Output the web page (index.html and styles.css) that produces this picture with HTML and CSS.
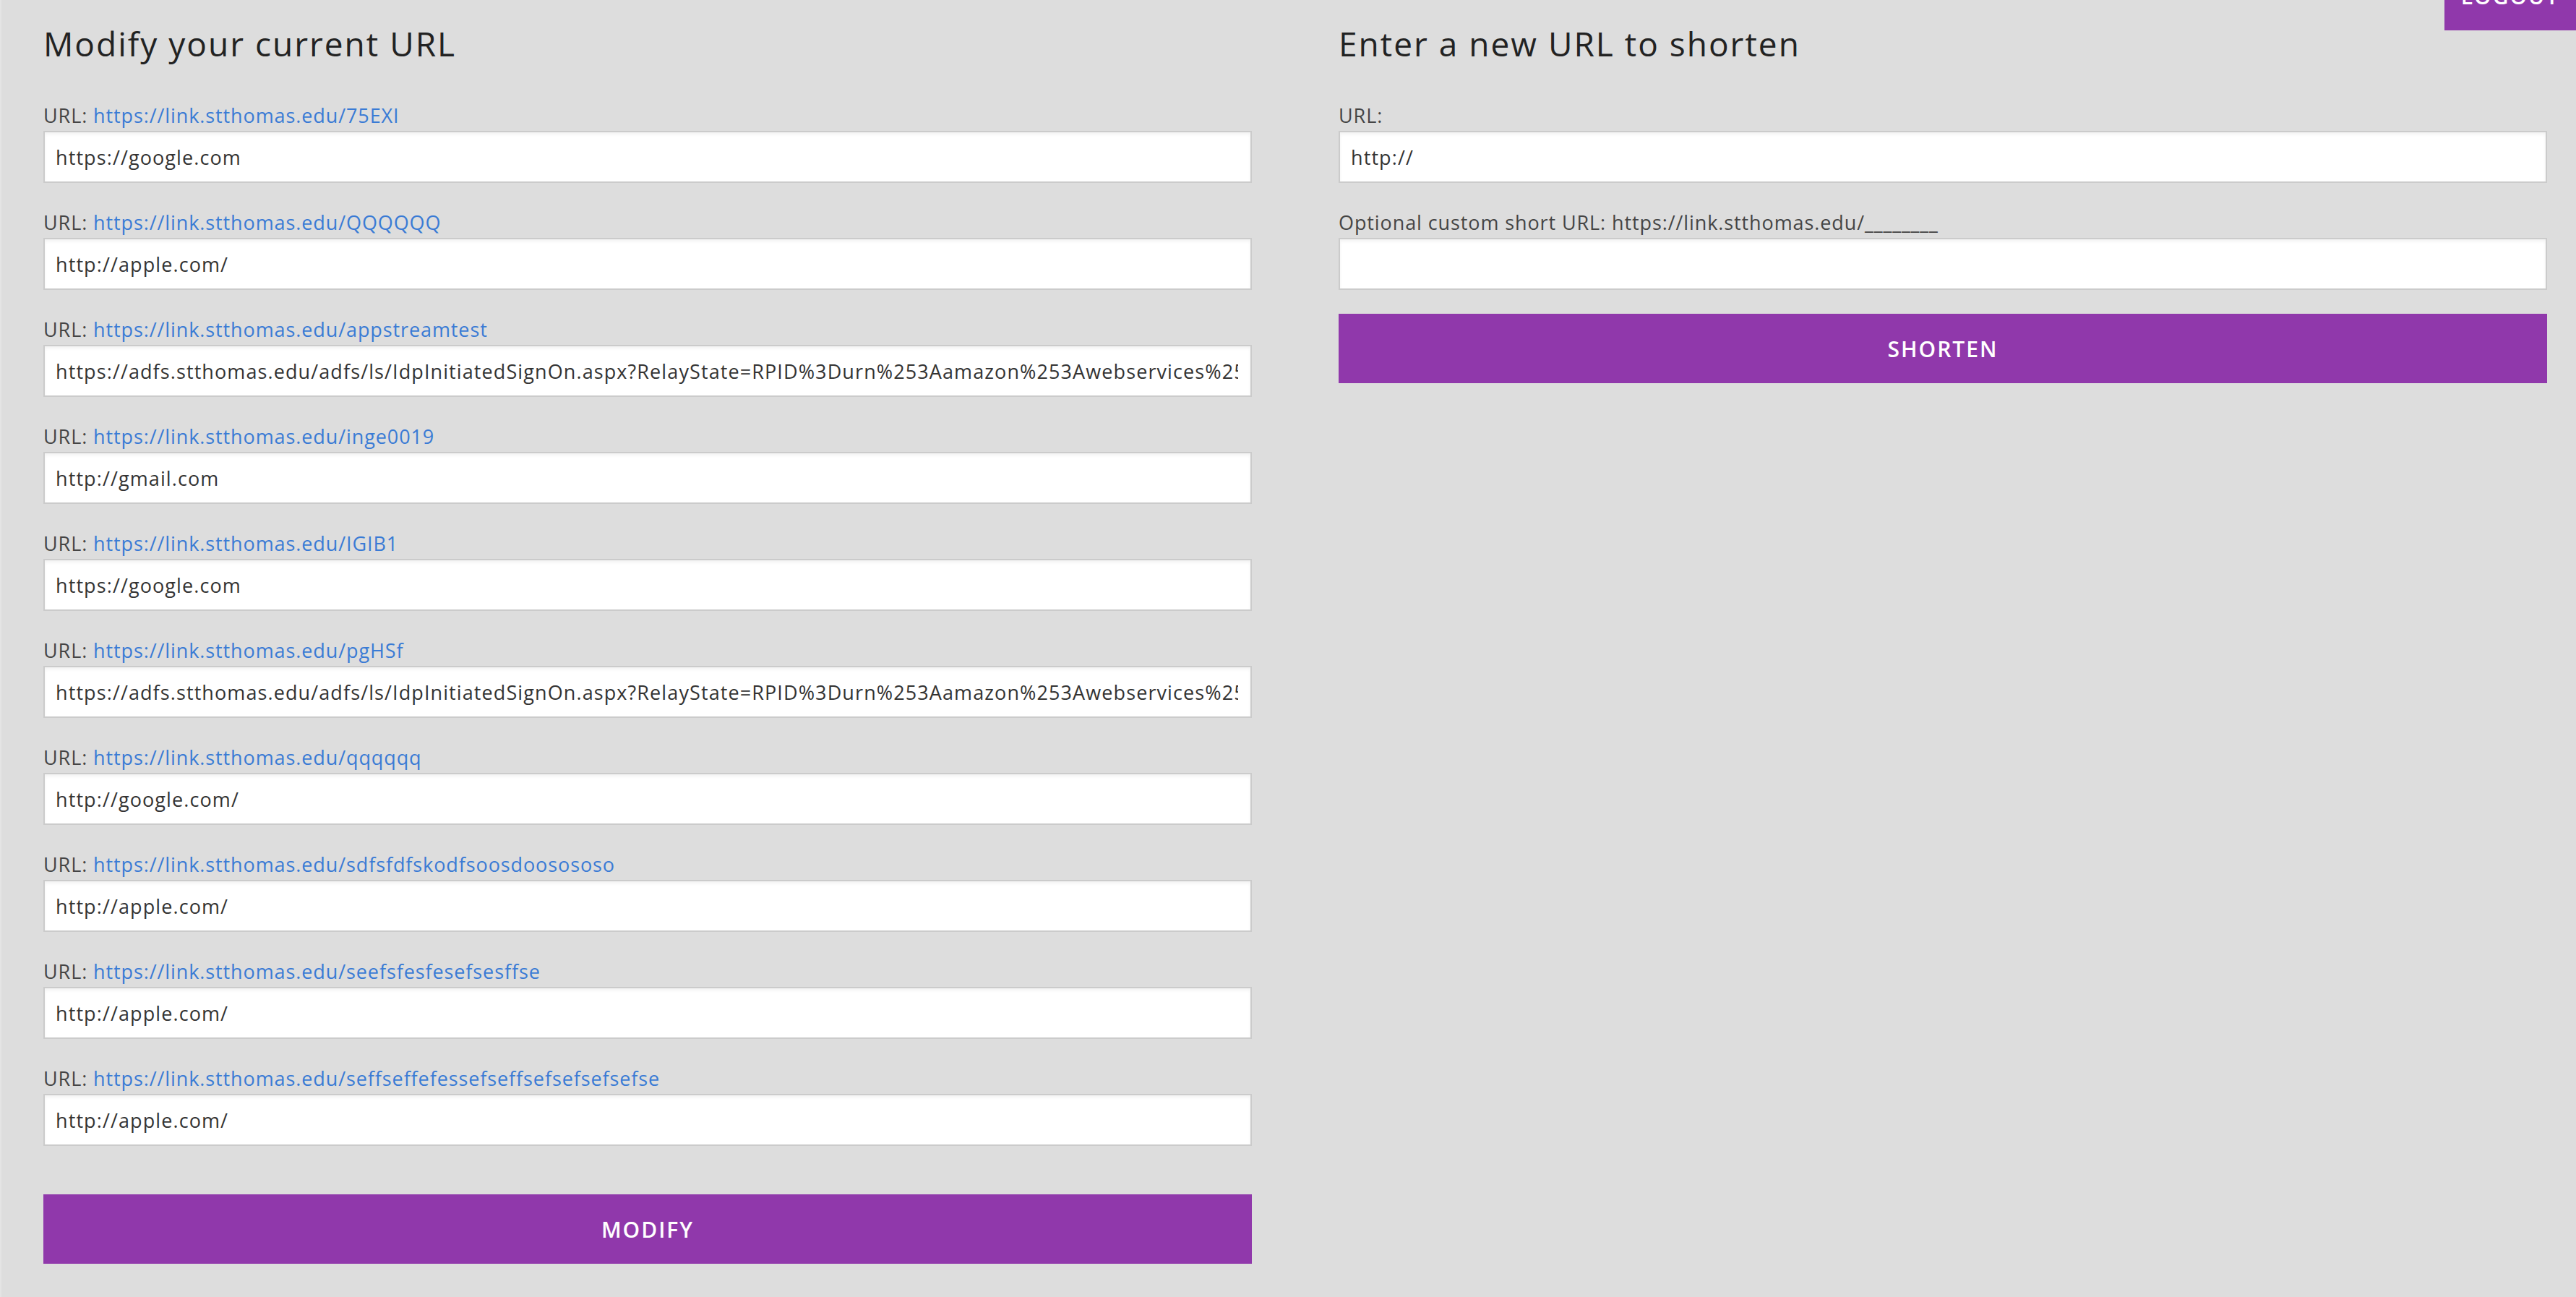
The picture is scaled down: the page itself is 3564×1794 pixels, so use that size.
FILE: index.html
```html
<!DOCTYPE html>
<html lang="en">
<head>
<meta charset="utf-8">
<title>Link Shortener</title>
<link rel="stylesheet" href="styles.css">
</head>
<body>
<a class="logout" href="#">LOGOUT</a>
<main class="page">
  <section class="col">
    <h2 class="title">Modify your current URL</h2>
    <form class="form">
      <div class="field">
        <label class="label">URL: <a class="link" href="#">https://link.stthomas.edu/75EXI</a></label>
        <input class="input" type="text" value="https://google.com">
      </div>
      <div class="field">
        <label class="label">URL: <a class="link" href="#">https://link.stthomas.edu/QQQQQQ</a></label>
        <input class="input" type="text" value="http://apple.com/">
      </div>
      <div class="field">
        <label class="label">URL: <a class="link" href="#">https://link.stthomas.edu/appstreamtest</a></label>
        <input class="input" type="text" value="https://adfs.stthomas.edu/adfs/ls/IdpInitiatedSignOn.aspx?RelayState=RPID%3Durn%253Aamazon%253Awebservices%2526RelayState%253Dhttps%25253A%25252F%25252Fappstream2.aws.amazon.com">
      </div>
      <div class="field">
        <label class="label">URL: <a class="link" href="#">https://link.stthomas.edu/inge0019</a></label>
        <input class="input" type="text" value="http://gmail.com">
      </div>
      <div class="field">
        <label class="label">URL: <a class="link" href="#">https://link.stthomas.edu/IGIB1</a></label>
        <input class="input" type="text" value="https://google.com">
      </div>
      <div class="field">
        <label class="label">URL: <a class="link" href="#">https://link.stthomas.edu/pgHSf</a></label>
        <input class="input" type="text" value="https://adfs.stthomas.edu/adfs/ls/IdpInitiatedSignOn.aspx?RelayState=RPID%3Durn%253Aamazon%253Awebservices%2526RelayState%253Dhttps%25253A%25252F%25252Fappstream2.aws.amazon.com">
      </div>
      <div class="field">
        <label class="label">URL: <a class="link" href="#">https://link.stthomas.edu/qqqqqq</a></label>
        <input class="input" type="text" value="http://google.com/">
      </div>
      <div class="field">
        <label class="label">URL: <a class="link" href="#">https://link.stthomas.edu/sdfsfdfskodfsoosdoosososo</a></label>
        <input class="input" type="text" value="http://apple.com/">
      </div>
      <div class="field">
        <label class="label">URL: <a class="link" href="#">https://link.stthomas.edu/seefsfesfesefsesffse</a></label>
        <input class="input" type="text" value="http://apple.com/">
      </div>
      <div class="field">
        <label class="label">URL: <a class="link" href="#">https://link.stthomas.edu/seffseffefessefseffsefsefsefsefse</a></label>
        <input class="input" type="text" value="http://apple.com/">
      </div>
      <button class="btn btn-modify" type="button">MODIFY</button>
    </form>
  </section>
  <section class="col">
    <h2 class="title">Enter a new URL to shorten</h2>
    <form class="form">
      <div class="field">
        <label class="label">URL:</label>
        <input class="input" type="text" value="http://">
      </div>
      <div class="field">
        <label class="label">Optional custom short URL: https://link.stthomas.edu/________</label>
        <input class="input" type="text" value="">
      </div>
      <button class="btn btn-shorten" type="button">SHORTEN</button>
    </form>
  </section>
</main>
</body>
</html>
```
FILE: styles.css
```css
html, body {
  margin: 0;
  padding: 0;
}
body {
  background: #dddddd;
  font-family: "Open Sans", "Liberation Sans", sans-serif;
  color: #333;
  min-height: 1794px;
  border-left: 2px solid #e4e4e4;
  box-sizing: border-box;
  position: relative;
  overflow: hidden;
}
.page {
  display: grid;
  grid-template-columns: 1fr 1fr;
  column-gap: 120px;
  padding: 32px 40px 0 58px;
}
.col {
  display: flex;
  flex-direction: column;
}
.title {
  margin: 0 0 56px 0;
  font-size: 46px;
  line-height: 56px;
  font-weight: 400;
  color: #222;
  letter-spacing: 2px;
}
.form {
  display: flex;
  flex-direction: column;
  gap: 39px;
  margin: 0;
}
.field {
  display: flex;
  flex-direction: column;
}
.label {
  display: block;
  font-size: 27px;
  line-height: 32px;
  color: #454545;
  letter-spacing: 0.9px;
  margin-bottom: 5px;
}
.link {
  color: #3a7bd5;
  text-decoration: none;
}
.input {
  box-sizing: border-box;
  width: 100%;
  height: 72px;
  margin: 0;
  padding: 0 17px 0 15px;
  font-family: inherit;
  font-size: 27px;
  letter-spacing: 1.1px;
  color: #333;
  background: #fff;
  border: 2px solid #cbcbcb;
  border-radius: 0;
  box-shadow: inset 0 3px 4px rgba(0, 0, 0, 0.05);
  outline: none;
}
.btn {
  display: block;
  width: 100%;
  height: 96px;
  border: 0;
  border-radius: 0;
  background: #9038ab;
  color: #fff;
  font-family: inherit;
  font-size: 30px;
  font-weight: 600;
  letter-spacing: 2px;
  cursor: pointer;
}
.btn-modify {
  margin-top: 28px;
}
.btn-shorten {
  margin-top: -6px;
}
.logout {
  position: absolute;
  top: -54px;
  right: 0;
  width: 182px;
  height: 96px;
  display: flex;
  align-items: center;
  justify-content: center;
  background: #9038ab;
  color: #fff;
  font-size: 30px;
  font-weight: 600;
  letter-spacing: 2px;
  text-decoration: none;
}
```
